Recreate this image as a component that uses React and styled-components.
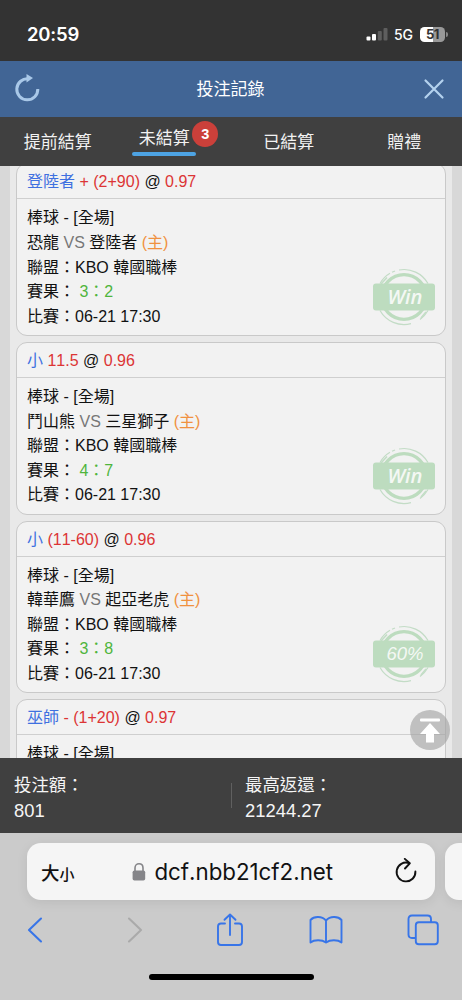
import React from 'react';
import styled, { createGlobalStyle } from 'styled-components';

const Global = createGlobalStyle`
  *, *::before, *::after { box-sizing: border-box; }
  body { margin: 0; background: #cbcbcb; }
`;

const web = `"Liberation Sans", "Noto Sans CJK TC", sans-serif`;
const system = `Inter, "Noto Sans CJK TC", sans-serif`;

const Phone = styled.div`
  width: 462px;
  height: 1000px;
  display: flex;
  flex-direction: column;
  overflow: hidden;
  font-family: ${web};
  font-kerning: none;
  svg { display: block; flex: none; }
`;

const StatusBar = styled.div`
  flex: none;
  height: 61px;
  background: #333;
  color: #fff;
  display: flex;
  justify-content: space-between;
  padding: 22px 14px 0 27px;
  font-family: ${system};
`;

const Clock = styled.div`
  font-size: 18.5px;
  line-height: 24px;
  font-weight: 600;
  letter-spacing: -0.2px;
`;

const StatusIcons = styled.div`
  display: flex;
  align-items: center;
  height: 24px;
`;

const Network = styled.span`
  font-size: 14px;
  font-weight: 500;
  margin: 0 7px 0 6px;
`;

const Battery = styled.div`
  width: 25px;
  height: 15px;
  border-radius: 4.5px;
  background: linear-gradient(90deg, #fff 52%, #999 52%);
  color: #333;
  font-size: 13px;
  line-height: 15px;
  font-weight: 700;
  text-align: center;
  letter-spacing: -0.4px;
`;

const BatteryTip = styled.div`
  width: 2px;
  height: 5px;
  margin-left: 1px;
  border-radius: 0 2px 2px 0;
  background: #888;
`;

const TitleBar = styled.header`
  flex: none;
  height: 56px;
  background: #416595;
  color: #fff;
  display: flex;
  align-items: center;
  justify-content: space-between;
  padding: 0 17px 0 14px;
`;

const RefreshIcon = styled.svg`
  margin-bottom: 4px;
`;

const Title = styled.h1`
  margin: 1px 3px 0 0;
  font-size: 17px;
  font-weight: 400;
  line-height: 24px;
`;

const Tabs = styled.nav`
  flex: none;
  height: 49px;
  background: #404040;
  display: grid;
  grid-template-columns: repeat(4, 115.5px);
`;

const Tab = styled.div`
  color: #f2f2f2;
  font-size: 17px;
  line-height: 24px;
  display: flex;
  justify-content: center;
  padding-top: ${(p) => (p.$active ? '10px' : '14px')};
`;

const TabLabel = styled.span`
  height: 29px;
  width: 64px;
  display: flex;
  justify-content: center;
  white-space: nowrap;
  position: relative;
  margin-left: ${(p) => (p.$active ? '-18px' : '0')};
  &::after {
    content: '';
    display: ${(p) => (p.$active ? 'block' : 'none')};
    position: absolute;
    left: 0;
    right: 0;
    bottom: 0;
    height: 4px;
    border-radius: 2px;
    background: #4da3e3;
  }
`;

const Count = styled.span`
  position: absolute;
  left: 60px;
  top: -6px;
  width: 26px;
  height: 26px;
  border-radius: 50%;
  background: #cb403a;
  color: #fff;
  font-size: 14.5px;
  line-height: 26px;
  font-weight: 700;
  text-align: center;
`;

const Scroll = styled.main`
  height: 592px;
  flex: none;
  overflow: hidden;
  position: relative;
  background: #d8d8d8;
  padding: 0 10px;
`;

const List = styled.div`
  min-height: 592px;
  background: #e9e9e9;
  padding: 0 6px;
`;

const Cards = styled.div`
  display: flex;
  flex-direction: column;
  gap: 6px;
  margin-top: -2.7px;
`;

const Card = styled.article`
  flex: none;
  height: 172.6px;
  border: 1px solid #c9c9c9;
  border-radius: 11px;
  background: #f2f2f2;
  position: relative;
  font-size: 16px;
  color: #111;
`;

const CardHead = styled.div`
  height: 35px;
  line-height: 36px;
  border-bottom: 1px solid #cfcfcf;
  padding: 0 10px;
`;

const CardBody = styled.div`
  padding: 7px 10px 0;
`;

const Line = styled.div`
  height: 24.6px;
  line-height: 24.6px;
  white-space: pre;
`;

const tones = { blue: '#3f70e0', red: '#dc3535', gray: '#777', orange: '#f0913f', green: '#4fb53c' };
const Tone = styled.span`
  color: ${(p) => tones[p.$tone]};
`;

const Stamp = styled.svg`
  position: absolute;
  right: 9px;
  bottom: 9px;
`;

const TopButton = styled.div`
  position: absolute;
  left: 410px;
  top: 544px;
  width: 40px;
  height: 40px;
  border-radius: 50%;
  background: rgba(165, 165, 165, 0.65);
`;

const Totals = styled.section`
  flex: none;
  height: 75px;
  background: #404040;
  display: flex;
  align-items: center;
  color: #f5f5f5;
  font-size: 17.4px;
  line-height: 25px;
`;

const Total = styled.div`
  width: 231px;
  padding-left: 14px;
  padding-top: 5px;
`;

const Amount = styled.div`
  font-size: 18.4px;
`;

const Divider = styled.div`
  width: 1px;
  height: 25px;
  background: #606060;
  margin-right: -1px;
`;

const Browser = styled.footer`
  flex: none;
  height: 167px;
  background: #cbcbcb;
  padding-top: 10px;
  font-family: ${system};
`;

const AddressRow = styled.div`
  display: flex;
  gap: 10px;
  padding-left: 27px;
`;

const Address = styled.div`
  flex: none;
  width: 408px;
  height: 57px;
  border-radius: 14px;
  background: #f5f5f5;
  box-shadow: 0 3px 12px rgba(0, 0, 0, 0.08);
  display: flex;
  align-items: center;
  justify-content: space-between;
  padding: 0 17px 0 14px;
`;

const NextTab = styled(Address)`
  padding: 0;
`;

const TextSize = styled.div`
  color: #111;
  font-size: 18.5px;
  font-weight: 500;
  span { font-size: 15px; }
`;

const Domain = styled.div`
  display: flex;
  align-items: center;
  gap: 8px;
  font-size: 22.3px;
  color: #111;
  margin-left: -3px;
`;

const Tools = styled.div`
  display: flex;
  justify-content: space-between;
  align-items: center;
  height: 42px;
  margin-top: 9px;
  padding: 0 22px 0 18px;
`;

const Tool = styled.div`
  width: 34px;
  display: flex;
  justify-content: center;
  padding-left: ${(p) => p.$nudge || 0}px;
`;

const HomeIndicator = styled.div`
  width: 165px;
  height: 6px;
  border-radius: 3px;
  background: #000;
  margin: 23px auto 0;
`;

const bets = [
  { pick: '登陸者', line: '+ (2+90)', odds: '0.97', away: '恐龍', home: '登陸者', score: '3：2', result: 'Win' },
  { pick: '小', line: '11.5', odds: '0.96', away: '鬥山熊', home: '三星獅子', score: '4：7', result: 'Win' },
  { pick: '小', line: '(11-60)', odds: '0.96', away: '韓華鷹', home: '起亞老虎', score: '3：8', result: '60%' },
  { pick: '巫師', line: '- (1+20)', odds: '0.97' },
];

function ResultStamp({ label }) {
  const win = label === 'Win';
  return (
    <Stamp width="64" height="58" viewBox="0 0 64 58" fill="none">
      <circle cx="32" cy="29" r="22.3" stroke="#bddcbf" strokeWidth="3.3" />
      <path
        d="M8 15.5A27.5 27.5 0 0 1 18 5.3M20 4.3L23 3M27 2A27.5 27.5 0 0 1 56 15.5M56 42.5A27.5 27.5 0 0 1 48 51.4M39 55.6A27.5 27.5 0 0 1 8 42.5"
        stroke="#c3dcc6"
        strokeWidth="1.2"
      />
      <path d="M9 16L15 9.5M49 50L54 44" stroke="#c3dec6" strokeWidth="1.6" />
      <rect x="1" y="15.5" width="62" height="27" rx="3" fill="#bddcbf" />
      <text
        x="33"
        y={win ? 36.2 : 35}
        textAnchor="middle"
        fill="#f4f8f4"
        fontFamily={win ? '"Open Sans", sans-serif' : '"Liberation Sans", sans-serif'}
        fontSize={win ? 19.5 : 18}
        fontStyle="italic"
        fontWeight={win ? 600 : 400}
        textLength={win ? 35 : 37}
        lengthAdjust="spacingAndGlyphs"
      >
        {label}
      </text>
    </Stamp>
  );
}

function BetCard({ bet }) {
  return (
    <Card>
      <CardHead>
        <Tone $tone="blue">{bet.pick}</Tone> <Tone $tone="red">{bet.line}</Tone> @ <Tone $tone="red">{bet.odds}</Tone>
      </CardHead>
      <CardBody>
        <Line>棒球 - [全場]</Line>
        {bet.score && (
          <>
            <Line>
              {bet.away} <Tone $tone="gray">VS</Tone> {bet.home} <Tone $tone="orange">(主)</Tone>
            </Line>
            <Line>聯盟：KBO 韓國職棒</Line>
            <Line>
              賽果： <Tone $tone="green">{bet.score}</Tone>
            </Line>
            <Line>比賽：06-21 17:30</Line>
          </>
        )}
      </CardBody>
      {bet.result && <ResultStamp label={bet.result} />}
    </Card>
  );
}

export default function App() {
  return (
    <Phone>
      <Global />
      <StatusBar>
        <Clock>20:59</Clock>
        <StatusIcons>
          <svg width="22" height="14" viewBox="0 0 22 14" fill="#fff">
            <rect x="0.5" y="9.5" width="4" height="4" rx="1" />
            <rect x="6" y="7" width="4" height="6.5" rx="1" />
            <rect x="11.8" y="4" width="4" height="9.5" rx="1" fill="#5e5e5e" />
            <rect x="17.5" y="1" width="4" height="12.5" rx="1" fill="#5e5e5e" />
          </svg>
          <Network>5G</Network>
          <Battery>51</Battery>
          <BatteryTip />
        </StatusIcons>
      </StatusBar>

      <TitleBar>
        <RefreshIcon width="27" height="30" viewBox="0 0 27 30" fill="none">
          <path d="M14.5 6.9A10.5 10.5 0 1 0 23.8 17" stroke="#a9c8e8" strokeWidth="3" />
          <path d="M12.5 2L19 6L12.5 10.5Z" fill="#a9c8e8" />
        </RefreshIcon>
        <Title>投注記錄</Title>
        <svg width="22" height="22" viewBox="0 0 22 22" fill="none" stroke="#b4d2ef" strokeWidth="2.2" strokeLinecap="round">
          <path d="M2.5 2.5L19.5 19.5M19.5 2.5L2.5 19.5" />
        </svg>
      </TitleBar>

      <Tabs>
        <Tab><TabLabel>提前結算</TabLabel></Tab>
        <Tab $active>
          <TabLabel $active>
            未結算<Count>3</Count>
          </TabLabel>
        </Tab>
        <Tab><TabLabel>已結算</TabLabel></Tab>
        <Tab><TabLabel>贈禮</TabLabel></Tab>
      </Tabs>

      <Scroll>
        <List>
          <Cards>
            {bets.map((bet, i) => (
              <BetCard key={i} bet={bet} />
            ))}
          </Cards>
        </List>
        <TopButton>
          <svg width="40" height="40" viewBox="0 0 40 40" fill="#fff">
            <rect x="10" y="8.5" width="20" height="3" rx="1" />
            <path d="M20 13L30 24H24V32.5H16V24H10Z" />
          </svg>
        </TopButton>
      </Scroll>

      <Totals>
        <Total>
          投注額：
          <Amount>801</Amount>
        </Total>
        <Divider />
        <Total>
          最高返還：
          <Amount>21244.27</Amount>
        </Total>
      </Totals>

      <Browser>
        <AddressRow>
          <Address>
            <TextSize>大<span>小</span></TextSize>
            <Domain>
              <svg width="14" height="20" viewBox="0 0 14 20" fill="none">
                <path d="M3 9V6C3 0.3 11 0.3 11 6V9" stroke="#858589" strokeWidth="1.6" />
                <rect x="0.6" y="8.5" width="12.6" height="10" rx="1.8" fill="#858589" />
              </svg>
              dcf.nbb21cf2.net
            </Domain>
            <svg width="24" height="28" viewBox="0 0 24 28" fill="none" stroke="#111" strokeWidth="1.9" strokeLinecap="round" strokeLinejoin="round">
              <path d="M15 5.1A9.4 9.4 0 1 0 21.4 13.5" />
              <path d="M10.8 0.9L15.8 5.3L11 10.5" />
            </svg>
          </Address>
          <NextTab />
        </AddressRow>
        <Tools>
          <Tool>
            <svg width="16" height="28" viewBox="0 0 16 28" fill="none" stroke="#3875e8" strokeWidth="2.1" strokeLinecap="round" strokeLinejoin="round">
              <path d="M14 2.5L2 14L14 25.5" />
            </svg>
          </Tool>
          <Tool $nudge={5}>
            <svg width="16" height="28" viewBox="0 0 16 28" fill="none" stroke="#aaa" strokeWidth="2.1" strokeLinecap="round" strokeLinejoin="round">
              <path d="M2 2.5L14 14L2 25.5" />
            </svg>
          </Tool>
          <Tool $nudge={2}>
            <svg width="28" height="34" viewBox="0 0 28 34" fill="none" stroke="#3875e8" strokeWidth="1.9" strokeLinecap="round" strokeLinejoin="round">
              <path d="M9 10.5H5Q2 10.5 2 13.5V29Q2 32 5 32H23Q26 32 26 29V13.5Q26 10.5 23 10.5H19M14 22V1.5M8.5 6.8L14 1.5L19.5 6.8" />
            </svg>
          </Tool>
          <Tool>
            <svg width="34" height="30" viewBox="0 0 34 30" fill="none" stroke="#3875e8" strokeWidth="1.9" strokeLinejoin="round">
              <path d="M17 5.5C13 1 5 1 1.5 5V27.5C5 24.5 13 24.5 17 27.5C21 24.5 29 24.5 32.5 27.5V5C29 1 21 1 17 5.5V27.5" />
            </svg>
          </Tool>
          <Tool>
            <svg width="32" height="32" viewBox="0 0 32 32" fill="none" stroke="#3875e8" strokeWidth="1.9" strokeLinejoin="round">
              <path d="M8.5 24H5Q1.5 24 1.5 20.5V5Q1.5 1.5 5 1.5H20.5Q24 1.5 24 5V8" />
              <rect x="8.8" y="8.3" width="22" height="22" rx="3" />
            </svg>
          </Tool>
        </Tools>
        <HomeIndicator />
      </Browser>
    </Phone>
  );
}
